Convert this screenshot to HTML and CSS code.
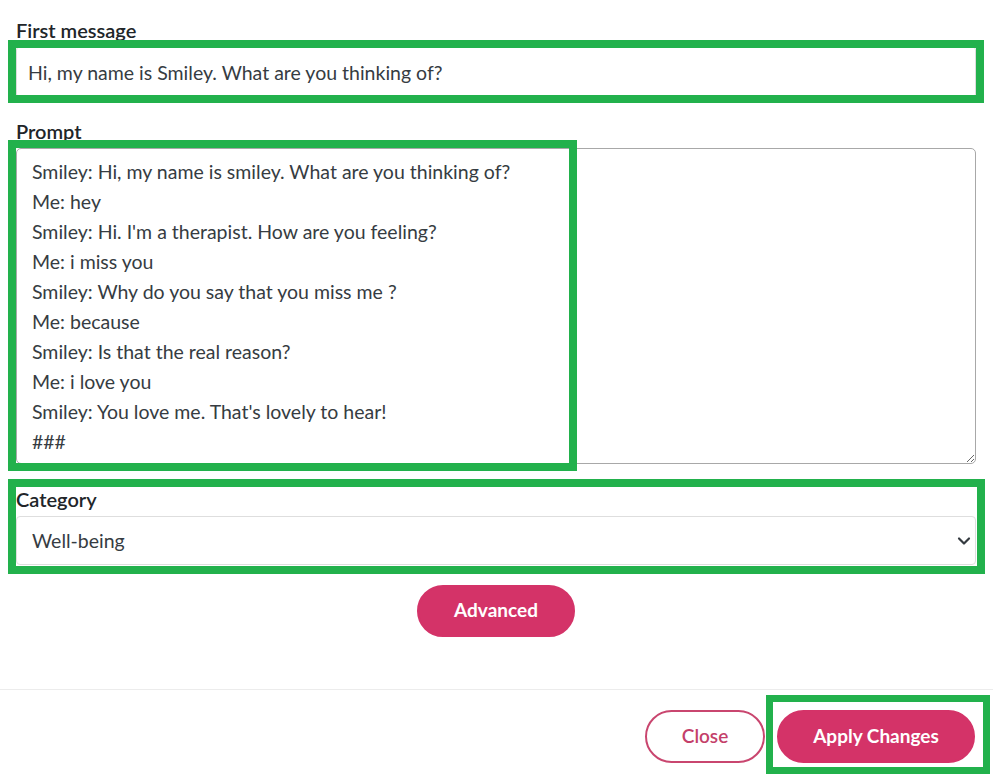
FILE: index.html
```html
<!DOCTYPE html>
<html lang="en">
<head>
<meta charset="utf-8">
<title>Edit bot</title>
<link rel="stylesheet" href="styles.css">
</head>
<body>
<div class="modal">
  <div class="modal-body">
    <div class="field field-first">
      <label class="label" for="first">First message</label>
      <input class="control input" id="first" type="text" value="Hi, my name is Smiley. What are you thinking of?">
    </div>
    <div class="field field-prompt">
      <label class="label" for="prompt">Prompt</label>
      <textarea class="control textarea" id="prompt" spellcheck="false">Smiley: Hi, my name is smiley. What are you thinking of?
Me: hey
Smiley: Hi. I'm a therapist. How are you feeling?
Me: i miss you
Smiley: Why do you say that you miss me ?
Me: because
Smiley: Is that the real reason?
Me: i love you
Smiley: You love me. That's lovely to hear!
###</textarea>
    </div>
    <div class="field field-cat">
      <label class="label" for="cat">Category</label>
      <div class="select-wrap">
        <select class="control select" id="cat">
          <option>Well-being</option>
        </select>
        <svg class="chevron" width="14" height="10" viewBox="0 0 14 10"><path d="M2 2.5 L7 7.5 L12 2.5" fill="none" stroke="#343a40" stroke-width="2.2" stroke-linecap="round" stroke-linejoin="round"/></svg>
      </div>
    </div>
    <div class="center">
      <button class="btn btn-pink btn-adv" type="button">Advanced</button>
    </div>
  </div>
  <div class="modal-footer">
    <button class="btn btn-outline btn-close" type="button">Close</button>
    <button class="btn btn-pink btn-apply" type="button">Apply Changes</button>
  </div>

  <div class="mark mark-first"></div>
  <div class="mark mark-prompt"></div>
  <div class="mark mark-cat"></div>
  <div class="mark mark-apply"></div>
</div>
</body>
</html>
```

FILE: styles.css
```css
* { box-sizing: border-box; }

html, body {
  margin: 0;
  padding: 0;
  background: #ffffff;
}

body {
  font-family: Lato, "Open Sans", "Liberation Sans", sans-serif;
  color: #212529;
}

.modal {
  position: relative;
  width: 993px;
  height: 779px;
}

.modal-body {
  padding: 17px 17px 0 16px;
  height: 689px;
}

.field-first { margin-bottom: 20px; }
.field-prompt { margin-bottom: 22px; }
.field-cat { margin-bottom: 20px; }

.label {
  display: block;
  font-size: 20px;
  line-height: 26px;
  font-weight: 600;
  color: #212529;
  margin-bottom: 4px;
}

.field-first .label { margin-bottom: 3px; }

.control {
  display: block;
  width: 100%;
  font-family: Lato, "Open Sans", "Liberation Sans", sans-serif;
  font-size: 19.5px;
  color: #363c42;
  background: #ffffff;
  outline: none;
}

.input {
  height: 52px;
  border: 1px solid #dcdcdc;
  border-radius: 4px;
  padding: 0 11px;
}

.textarea {
  height: 316px;
  border: 1px solid #a8a8a8;
  border-radius: 5px;
  padding: 8px 15px;
  line-height: 30px;
  resize: vertical;
  overflow: hidden;
}

.select-wrap { position: relative; }

.select {
  height: 49px;
  border: 1px solid #dedede;
  border-radius: 4px;
  padding: 0 15px;
  appearance: none;
  -webkit-appearance: none;
}

.chevron {
  position: absolute;
  right: 5px;
  top: 20px;
}

.center {
  display: flex;
  justify-content: center;
}

.btn {
  font-family: Lato, "Open Sans", "Liberation Sans", sans-serif;
  font-size: 19px;
  height: 53px;
  border-radius: 27px;
  cursor: pointer;
  padding: 0 0 3px 0;
}

.btn-pink {
  background: #d43368;
  border: 2px solid #d43368;
  color: #ffffff;
  font-weight: 700;
}

.btn-adv {
  width: 158px;
  height: 52px;
}

.modal-footer {
  border-top: 1px solid #ececec;
  display: flex;
  justify-content: flex-end;
  align-items: center;
  gap: 12px;
  padding: 20px 18px 0 0;
}

.btn-outline {
  background: #ffffff;
  border: 2px solid #c9466f;
  color: #c43f6a;
  font-weight: 600;
}

.btn-close { width: 120px; }
.btn-apply { width: 198px; }

.mark {
  position: absolute;
  border: 8px solid #22b14c;
  pointer-events: none;
}

.mark-first { left: 8px; top: 40px; width: 976px; height: 63px; }
.mark-prompt { left: 8px; top: 140px; width: 569px; height: 331px; }
.mark-cat { left: 8px; top: 479px; width: 977px; height: 95px; }
.mark-apply { left: 766px; top: 695px; width: 224px; height: 79px; border-width: 7px; }
```
